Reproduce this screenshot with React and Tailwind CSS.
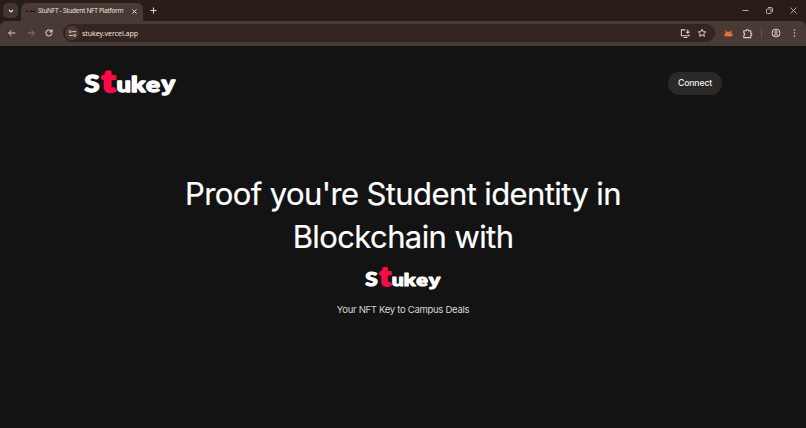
import React from "react";

function Logo({ className }) {
  return (
    <svg
      viewBox="0 0 94 30"
      className={className}
      role="img"
      aria-label="Stukey"
      overflow="visible"
      fontFamily="Lato, sans-serif"
      fontWeight="900"
      strokeLinejoin="round"
      strokeLinecap="round"
    >
      <g fill="#fff" stroke="#fff" strokeWidth="1.3">
        <text x="1.5" y="22.600" fontSize="22.500" textLength="15" lengthAdjust="spacingAndGlyphs">S</text>
        <text x="33.400" y="22.600" fontSize="21" textLength="14.500" lengthAdjust="spacingAndGlyphs">u</text>
        <text x="48" y="22.600" fontSize="20" textLength="14.300" lengthAdjust="spacingAndGlyphs">k</text>
        <text x="62.900" y="22.600" fontSize="21" textLength="14" lengthAdjust="spacingAndGlyphs">e</text>
        <text x="78.200" y="22.400" fontSize="20" fontFamily="'Liberation Sans', sans-serif" textLength="14" lengthAdjust="spacingAndGlyphs">y</text>
      </g>
      <text x="18.600" y="22.800" fontSize="31" textLength="13.800" lengthAdjust="spacingAndGlyphs" fill="#fb0a46" stroke="#fb0a46" strokeWidth="2.2">t</text>
    </svg>
  );
}

function Icon({ className, children, width = 1.2 }) {
  return (
    <svg viewBox="0 0 12 12" className={className} fill="none" stroke="currentColor" strokeWidth={width}>
      {children}
    </svg>
  );
}

function TabStrip() {
  return (
    <div className="flex h-[21px] items-end bg-[#281d19]">
      <div className="mb-[3px] ml-[3px] flex h-[15px] w-[15px] items-center justify-center rounded-[5px] bg-[#45352f]">
        <Icon className="h-2 w-2" width={1.6}><path d="M3 4.5 6 7.5 9 4.5" /></Icon>
      </div>
      <div className="ml-[3px] flex h-[18px] w-[122px] items-center rounded-t-[6px] bg-[#483a34] pr-[5px] pb-[2px] pl-[5px]">
        <svg viewBox="0 0 9 6" className="h-[6px] w-[9px] shrink-0">
          <path d="M0 3.3h2M4 3.3h5" stroke="#17110f" strokeWidth="1.3" />
          <path d="M2.7 1v4" stroke="#a01732" strokeWidth="1.2" />
        </svg>
        <span className="ml-[3px] w-[90px] whitespace-nowrap text-[6.5px] leading-[14px] tracking-[-0.27px]">StuNFT - Student NFT Platform</span>
        <Icon className="ml-auto h-[7px] w-[7px] shrink-0" width={1.6}><path d="m2.5 2.5 7 7m0-7-7 7" /></Icon>
      </div>
      <Icon className="mb-[6px] ml-[6px] h-[9px] w-[9px]" width={1.3}><path d="M6 2v8M2 6h8" /></Icon>
      <div className="mr-[8px] mb-[6px] ml-auto flex items-center gap-[15px] text-[#c8bbb5]">
        <Icon className="h-[9px] w-[9px]"><path d="M2 6h8" /></Icon>
        <Icon className="h-[9px] w-[9px]"><rect x="2" y="4" width="6" height="6" rx="1" /><path d="M4 2h4q2 0 2 2v4" /></Icon>
        <Icon className="h-[9px] w-[9px]"><path d="m2 2 8 8m0-8-8 8" /></Icon>
      </div>
    </div>
  );
}

function Toolbar() {
  return (
    <div className="flex h-[25px] items-center rounded-t-[6px] bg-[#483a34] pb-px pl-[7px] text-[#dccfc8]">
      <Icon className="h-[10px] w-[10px]"><path d="M10 6H2m3.5-3.5L2 6l3.5 3.5" /></Icon>
      <Icon className="ml-[9px] h-[10px] w-[10px] text-[#85766f]"><path d="M2 6h8M6.500 2.500 10 6 6.500 9.500" /></Icon>
      <Icon className="ml-[8px] h-[10px] w-[10px]" width={1.3}><path d="M9.500 6.600A3.600 3.600 0 1 1 8.800 3.700L9.500 4.500M9.600 1.800v2.900H6.700" /></Icon>
      <div className="ml-[9px] flex h-[18px] w-[652px] items-center rounded-full bg-[#33251f] pl-[2px]">
        <div className="flex h-[14px] w-[14px] items-center justify-center rounded-full bg-[#493a34]">
          <Icon className="h-[9px] w-[9px]" width={1.3}>
            <path d="M5.500 3.500H11M1 8.500h5.500" /><circle cx="3" cy="3.500" r="1.400" /><circle cx="9" cy="8.500" r="1.400" />
          </Icon>
        </div>
        <span className="ml-[3px] text-[7.100px] leading-[12px] tracking-[-0.09px] text-[#eee2dc]">stukey.vercel.app</span>
        <Icon className="mr-[6px] ml-auto h-[11px] w-[11px]">
          <path d="M6 2H1.500v6.500H10V7M4 10.300h4M8.500 1.500v4M6.700 4 8.500 5.700 10.300 4" />
        </Icon>
        <Icon className="mr-[8px] h-[10px] w-[10px]">
          <path d="m6 1.500 1.300 2.900 3.200.3-2.400 2.100.7 3.200L6 8.300 3.200 10l.7-3.200-2.400-2.100 3.200-.3Z" />
        </Icon>
      </div>
      <svg viewBox="0 0 10 9" className="ml-[9px] h-[9px] w-[9px]">
        <path d="M1 .7 4.200 2.600h1.600L9 .7l-.4 3.600L10 6.400 7.800 8 6 7.400H4L2.200 8 0 6.400l1.400-2.100Z" fill="#f06c2c" />
        <path d="M1 .7 3.200 2 2.600 3.300 1.400 4ZM9 .7 6.800 2l.6 1.300 1.200.7Z" fill="#a84220" />
        <path d="M4 6.600h2v1H4z" fill="#ddb29c" />
      </svg>
      <Icon className="ml-[9px] h-[11px] w-[11px]">
        <path d="M2 3h2.500a1.300 1.300 0 0 1 2.600 0H9.500v2.500a1.200 1.200 0 0 1 0 2.400v2.600H2V8a1.300 1.300 0 0 0 0-2.500Z" />
      </Icon>
      <div className="ml-[8px] h-[8px] w-px bg-[#69564e]" />
      <Icon className="ml-[9px] h-[10px] w-[10px]">
        <circle cx="6" cy="6" r="4.800" /><circle cx="6" cy="4.800" r="1.500" /><path d="M3 9q3-2.500 6 0" />
      </Icon>
      <svg viewBox="0 0 3 10" className="ml-[12px] h-[10px] w-[3px]" fill="currentColor">
        <circle cx="1.500" cy="2" r=".8" /><circle cx="1.500" cy="5" r=".8" /><circle cx="1.500" cy="8" r=".8" />
      </svg>
    </div>
  );
}

export default function App() {
  return (
    <div className="flex h-[428px] w-[806px] flex-col overflow-hidden bg-[#131313] font-['Inter',sans-serif] text-white">
      <div className="shrink-0 bg-[#281d19] font-['Noto_Sans','Open_Sans',sans-serif] text-[#eee2dc]">
        <TabStrip />
        <Toolbar />
      </div>
      <header className="flex h-[75px] shrink-0 items-center justify-between pr-[84px] pl-[83px]">
        <Logo className="h-[30px] w-[94px] overflow-visible" />
        <button className="h-[23px] w-[54px] rounded-full bg-[#2a2928] text-[8.700px] font-medium tracking-[-0.14px] text-[#f2f2f2]">Connect</button>
      </header>
      <main className="flex flex-col items-center pt-[51px]">
        <h1 className="w-[500px] text-center text-[31px] leading-[43px] font-normal tracking-[-0.6px] [-webkit-text-stroke:0.2px_white]">
          Proof you're Student identity in<br />Blockchain with
        </h1>
        <Logo className="mt-[9px] h-[25px] w-[78px] overflow-visible" />
        <p className="mt-[11px] text-[9.500px] leading-[14px] tracking-[-0.29px] text-[#d5d5d5]">Your NFT Key to Campus Deals</p>
      </main>
    </div>
  );
}
